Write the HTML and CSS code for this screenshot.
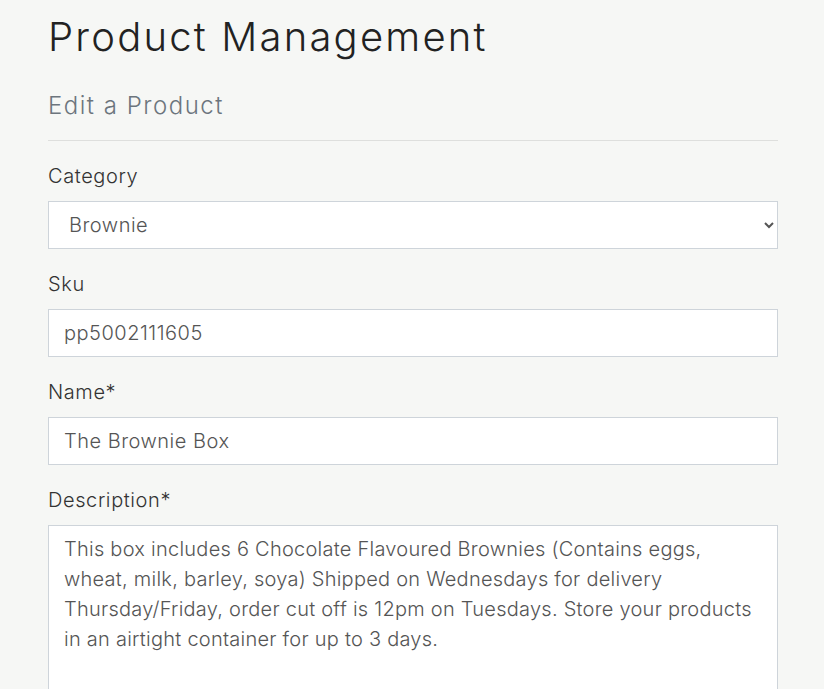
FILE: index.html
```html
<!DOCTYPE html>
<html lang="en">
<head>
<meta charset="utf-8">
<title>Product Management</title>
<link rel="stylesheet" href="styles.css">
</head>
<body>
<main class="page">
  <h1 class="title">Product Management</h1>
  <h2 class="subtitle">Edit a Product</h2>
  <hr class="rule">
  <form class="form">
    <div class="group">
      <label class="label" for="category">Category</label>
      <select class="control select" id="category">
        <option>Brownie</option>
      </select>
    </div>
    <div class="group">
      <label class="label" for="sku">Sku</label>
      <input class="control" id="sku" type="text" value="pp5002111605">
    </div>
    <div class="group">
      <label class="label" for="name">Name*</label>
      <input class="control" id="name" type="text" value="The Brownie Box">
    </div>
    <div class="group">
      <label class="label" for="description">Description*</label>
      <textarea class="control area" id="description" rows="7">This box includes 6 Chocolate Flavoured Brownies (Contains eggs, wheat, milk, barley, soya) Shipped on Wednesdays for delivery Thursday/Friday, order cut off is 12pm on Tuesdays. Store your products in an airtight container for up to 3 days.</textarea>
    </div>
  </form>
</main>
</body>
</html>
```

FILE: styles.css
```css
html, body {
  margin: 0;
  padding: 0;
  background: #f6f7f5;
}

body {
  font-family: Inter, "DejaVu Sans", sans-serif;
  font-weight: 300;
  color: #333;
  overflow: hidden;
}

.page {
  width: 730px;
  padding: 13px 0 0 48px;
}

.title {
  margin: 0;
  font-size: 40px;
  line-height: 48px;
  font-weight: 300;
  letter-spacing: 2.2px;
  color: #222;
}

.subtitle {
  margin: 30px 0 0;
  font-size: 24px;
  line-height: 29px;
  font-weight: 300;
  letter-spacing: 1.5px;
  color: #6c757d;
}

.rule {
  margin: 20px 0 0;
  border: 0;
  border-top: 1px solid #dedfdd;
  height: 0;
}

.form {
  display: flex;
  flex-direction: column;
  gap: 20px;
  margin-top: 20px;
}

.group {
  display: flex;
  flex-direction: column;
}

.label {
  font-size: 20px;
  line-height: 30px;
  margin-bottom: 10px;
  letter-spacing: 0.6px;
  color: #333;
}

.control {
  box-sizing: border-box;
  width: 100%;
  height: 48px;
  padding: 8px 15px;
  font-family: inherit;
  font-weight: 300;
  font-size: 20px;
  line-height: 30px;
  letter-spacing: 0.5px;
  color: #555;
  background: #fff;
  border: 1px solid #ced4da;
  border-radius: 0;
  outline: none;
}

.select {
  padding-left: 16px;
}

.area {
  height: 240px;
  padding: 8px 8px 8px 15px;
  letter-spacing: 0.25px;
  resize: vertical;
}
```
